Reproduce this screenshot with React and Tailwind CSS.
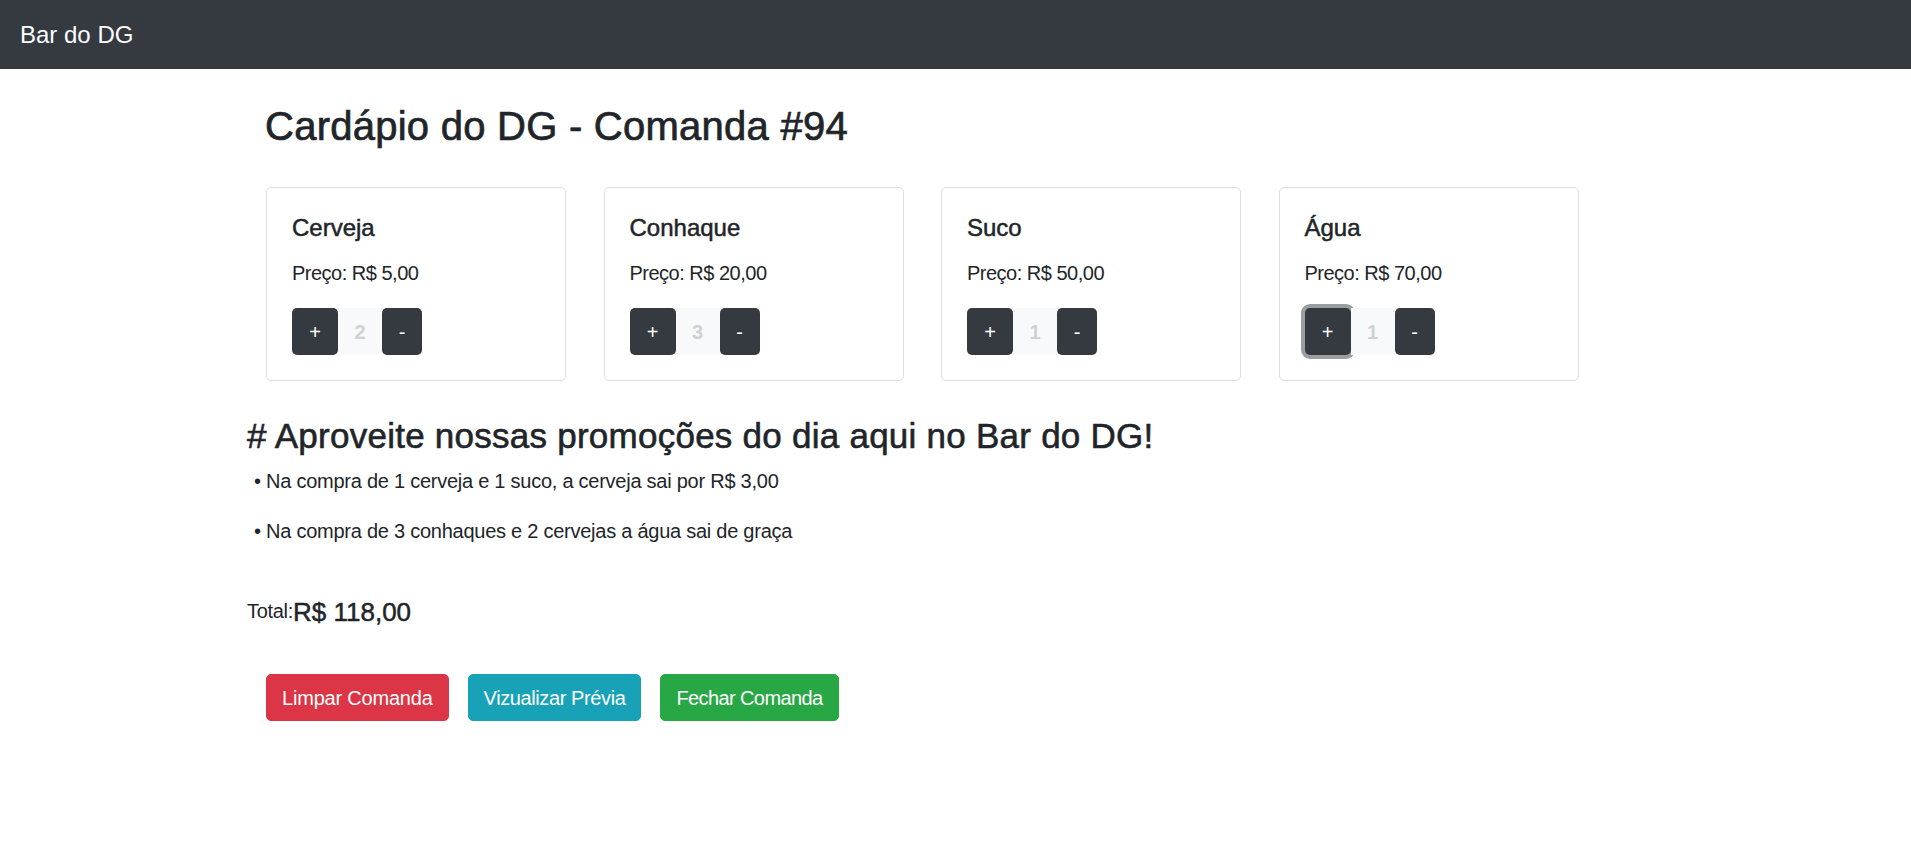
import { useState } from "react";

const items = [
  { id: 1, name: "Cerveja", price: "5,00", qty: 2 },
  { id: 2, name: "Conhaque", price: "20,00", qty: 3 },
  { id: 3, name: "Suco", price: "50,00", qty: 1 },
  { id: 4, name: "Água", price: "70,00", qty: 1, focused: true },
];

function ItemCard({ name, price, qty, focused }) {
  return (
    <div className="w-[300px] shrink-0 rounded-[5px] border border-[#dfdfdf] bg-white p-[25px]">
      <h5 className="mb-[15px] text-[24px] leading-[30px] [-webkit-text-stroke:0.5px]">{name}</h5>
      <p className="mb-[20px] text-[20px] leading-[30px] tracking-[-0.5px]">Preço: R$ {price}</p>
      <div className="flex h-[47px]">
        <button
          className={`w-[46px] rounded-[5px] bg-[#343a40] text-[20px] leading-[30px] text-white ${
            focused ? "ring-4 ring-[#9b9ea1]" : ""
          }`}
        >
          +
        </button>
        <span className="flex w-[44px] items-center justify-center bg-[#f8f9fa] text-[20px] font-bold text-[#cfd1d3]">
          {qty}
        </span>
        <button className="w-[40px] rounded-[5px] bg-[#343a40] text-[20px] leading-[30px] text-white">
          -
        </button>
      </div>
    </div>
  );
}

export default function App() {
  const [cards] = useState(items);

  return (
    <div
      className="min-h-screen bg-white text-[#212529]"
      style={{ fontFamily: '"Liberation Sans", Arial, sans-serif' }}
    >
      {/* Navbar */}
      <nav className="flex h-[69px] items-center bg-[#343a40] px-[20px]">
        <span className="text-[24px] leading-[36px] text-white">Bar do DG</span>
      </nav>

      <div className="pl-[247px]">
        <h1 className="ml-[18px] mt-[33px] text-[40px] leading-[48px] tracking-[0.25px] [-webkit-text-stroke:0.7px]">
          Cardápio do DG - Comanda #94
        </h1>

        {/* Cards */}
        <div className="ml-[19px] mt-[37px] flex gap-[37.5px]">
          {cards.map((item) => (
            <ItemCard key={item.id} {...item} />
          ))}
        </div>

        {/* Promoções */}
        <h3 className="mt-[34px] mb-[9px] text-[35px] leading-[42px] tracking-[0.25px] [-webkit-text-stroke:0.6px]">
          # Aproveite nossas promoções do dia aqui no Bar do DG!
        </h3>
        <p className="mb-[20px] ml-[7px] text-[20px] leading-[30px] tracking-[-0.25px]">
          • Na compra de 1 cerveja e 1 suco, a cerveja sai por R$ 3,00
        </p>
        <p className="mb-[20px] ml-[7px] text-[20px] leading-[30px] tracking-[-0.25px]">
          • Na compra de 3 conhaques e 2 cervejas a água sai de graça
        </p>

        {/* Total */}
        <div className="mt-[50px] flex items-start">
          <span className="text-[20px] leading-[30px] tracking-[-0.3px]">Total:</span>
          <h5 className="mt-[1px] text-[26px] leading-[30px] [-webkit-text-stroke:0.5px]">R$ 118,00</h5>
        </div>

        {/* Ações */}
        <div className="ml-[19px] mt-[47px] flex gap-[19px]">
          <button className="rounded-[5px] border border-[#dc3545] bg-[#dc3545] px-[15px] py-[7.5px] text-[20px] leading-[30px] tracking-[-0.2px] text-white">
            Limpar Comanda
          </button>
          <button className="rounded-[5px] border border-[#17a2b8] bg-[#17a2b8] px-[15px] py-[7.5px] text-[20px] leading-[30px] tracking-[-0.4px] text-white">
            Vizualizar Prévia
          </button>
          <button className="rounded-[5px] border border-[#28a745] bg-[#28a745] px-[15px] py-[7.5px] text-[20px] leading-[30px] tracking-[-0.6px] text-white">
            Fechar Comanda
          </button>
        </div>
      </div>
    </div>
  );
}
